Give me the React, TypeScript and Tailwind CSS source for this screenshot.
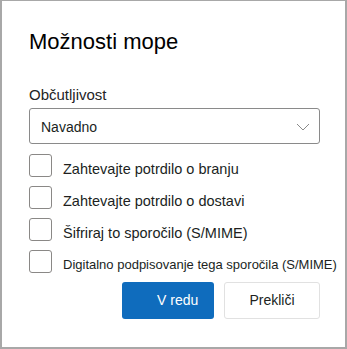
import { useState } from 'react'

const options = [
  { label: 'Zahtevajte potrdilo o branju', size: 'text-[14.5px]' },
  { label: 'Zahtevajte potrdilo o dostavi', size: 'text-[14.5px]' },
  { label: 'Šifriraj to sporočilo (S/MIME)', size: 'text-[14.5px]' },
  { label: 'Digitalno podpisovanje tega sporočila (S/MIME)', size: 'text-[13px]' },
]

function Checkbox({ label, size }: { label: string; size: string }) {
  const [checked, setChecked] = useState(false)
  return (
    <label className="flex items-center h-[23px] cursor-pointer" onClick={() => setChecked(!checked)}>
      <span className="w-[23px] h-[23px] shrink-0 rounded-[3px] border border-[#8a8886] bg-white" />
      <span className={`ml-[11px] mt-[6px] leading-[20px] text-[#201f1e] whitespace-nowrap ${size}`}>{label}</span>
    </label>
  )
}

export default function App() {
  return (
    <div
      className="w-[347px] h-[349px] bg-white border-x-2 border-b-2 border-t border-[#a8a8a8] pl-[27px] pt-[27px] text-[#242424]"
      style={{ fontFamily: '"Liberation Sans", Arial, sans-serif' }}
    >
      <h1 className="text-[22px] leading-[28px] text-[#000]">Možnosti mope</h1>

      <div className="mt-[29px] text-[15px] leading-[20px]">Občutljivost</div>

      <div className="mt-[3px] w-[291px] h-[36px] rounded-[3px] border border-[#8a8a8a] flex items-center pl-[11px] pr-[8px]">
        <span className="text-[14px] pt-[3px] text-[#201f1e]">Navadno</span>
        <svg className="ml-auto mr-[1px] mt-[1px]" width="14" height="8" viewBox="0 0 14 8" fill="none">
          <path d="M1 1l6 6 6-6" stroke="#8a8a8a" strokeWidth="1" />
        </svg>
      </div>

      <div className="mt-[10px] flex flex-col gap-[9px]">
        {options.map((o) => (
          <Checkbox key={o.label} label={o.label} size={o.size} />
        ))}
      </div>

      <div className="mt-[9px] w-[291px] flex justify-end gap-[10px]">
        <button className="w-[92px] h-[37px] rounded-[3px] bg-[#0f6cbd] text-white text-[14px] pl-[35px] text-left">
          V redu
        </button>
        <button className="w-[96px] h-[37px] rounded-[3px] bg-white border border-[#e1e1e1] text-[#201f1e] text-[14px]">
          Prekliči
        </button>
      </div>
    </div>
  )
}
